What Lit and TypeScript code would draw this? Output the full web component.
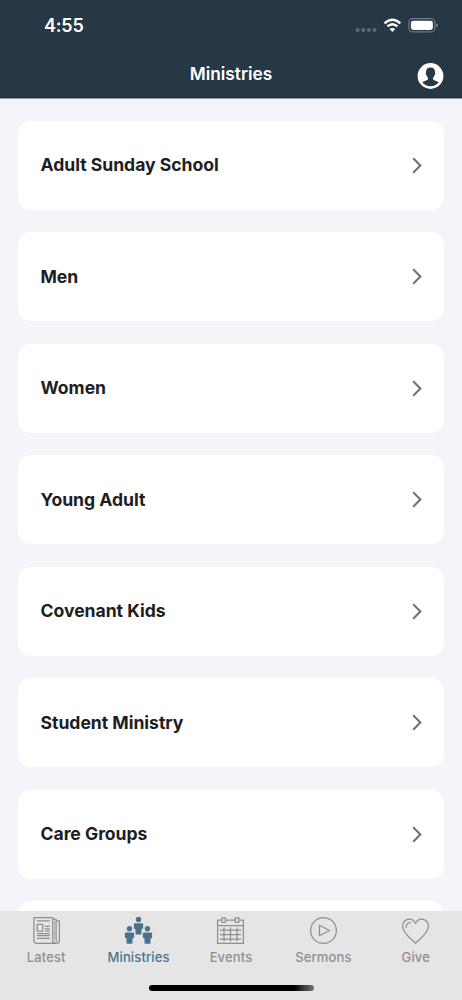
import { LitElement, html, css, svg } from "lit";
import { customElement, property } from "lit/decorators.js";

const ITEMS = [
  "Adult Sunday School",
  "Men",
  "Women",
  "Young Adult",
  "Covenant Kids",
  "Student Ministry",
  "Care Groups",
];

const person = (x: number, y: number) => svg`
  <g transform="translate(${x} ${y})" fill="currentColor" stroke="none">
    <circle cx="4.5" cy="2.9" r="2.7" />
    <path d="M.8 6.6H8.2Q9.1 6.6 9.1 7.5V12.2H7.7L7.3 18H1.7L1.3 12.2H-.1V7.5Q-.1 6.6 .8 6.6Z" />
  </g>`;

const ICONS: Record<string, unknown> = {
  latest: svg`
    <path d="M.9 .6H19.7V23.2Q19.7 26.3 22.5 26.3H3.6Q.9 26.3 .9 23.4Z" />
    <path d="M19.7 2H23.1V23Q23.1 24.2 24.2 24.2M23.1 3.8H26.4V23.4Q26.4 26.3 23.4 26.3H22.3Q20.9 26.2 20.6 24.5" />
    <path d="M21.5 4V22.8" stroke-width=".6" />
    <path d="M4 3.9H16.8M4.2 7.4H9.8V14.1H4.2ZM12 9.3H16.8M12 11.8H16.8M12 14.2H16.8M4 16.5H16.8M4 18.5H16.8M4 21.4H16.8" />`,
  ministries: svg`${person(9, -0.4)}${person(0, 8.8)}${person(18, 8.8)}`,
  events: svg`
    <path d="M4.6 3H.6V26.4H26.4V3H22.4M8.6 3H18M.6 8.7H26.4" />
    <path d="M4.8 .8H8.4V5.3H4.8ZM18.3 .8H21.9V5.3H18.3Z" />
    <path d="M2.7 13.1H24.3M2.7 17.6H24.3M2.7 22.1H24.3M7 10.6V24.5M13.5 10.6V24.5M20 10.6V24.5" />`,
  sermons: svg`
    <circle cx="13.5" cy="13.5" r="12.9" />
    <path d="M9.5 8.3V18.7L19.6 13.5Z" />`,
  give: svg`
    <path d="M13.5 26.2C10.5 23.2 .6 16.7 .6 9.1C.6 4.8 3.9 2 7.4 2C10.2 2 12.3 3.5 13.5 6.3C14.7 3.5 16.8 2 19.6 2C23.1 2 26.4 4.8 26.4 9.1C26.4 16.7 16.5 23.2 13.5 26.2Z" />
    <path d="M4.1 10.8C3.7 7.6 5.9 5.3 9.1 5.5" />`,
};

@customElement("tab-item")
class TabItem extends LitElement {
  @property() icon = "latest";
  @property() label = "";

  static styles = css`
    :host {
      display: flex;
      flex-direction: column;
      align-items: center;
      color: #8f8f8f;
    }
    :host([active]) {
      color: #4b728d;
    }
    svg {
      display: block;
      width: 27px;
      height: 27px;
      fill: none;
      stroke: currentColor;
      stroke-width: 1.25;
      stroke-linejoin: round;
      overflow: visible;
    }
    .label {
      margin-top: 5px;
      font-size: 13px;
      line-height: 16px;
      font-weight: 450;
      letter-spacing: 0.15px;
      white-space: nowrap;
    }
  `;

  render() {
    return html`
      <svg viewBox="0 0 27 27">${ICONS[this.icon]}</svg>
      <span class="label">${this.label}</span>
    `;
  }
}

@customElement("app-root")
class AppRoot extends LitElement {
  static styles = css`
    :host {
      display: flex;
      flex-direction: column;
      height: 1000px;
      width: 462px;
      overflow: hidden;
      background: #f4f5fa;
      font-family: Inter, "Liberation Sans", sans-serif;
    }
    * {
      box-sizing: border-box;
    }
    svg {
      display: block;
    }
    .header {
      flex: none;
      height: 99px;
      background: #263746;
      color: #fff;
      border-bottom: 1px solid #929aa3;
      box-shadow: inset 0 -1px #1f2e3b;
    }
    .status {
      display: flex;
      align-items: center;
      height: 50px;
      padding: 0 24px 0 44px;
    }
    .time {
      flex: 1;
      font-size: 18px;
      font-weight: 600;
      letter-spacing: -0.2px;
      padding-top: 1px;
    }
    .nav {
      display: grid;
      grid-template-columns: 45px 1fr 45px;
      height: 46px;
      align-items: center;
    }
    .title {
      text-align: center;
      font-size: 17.3px;
      font-weight: 600;
      letter-spacing: 0;
    }
    .profile {
      width: 26px;
      height: 26px;
      margin-top: 6px;
      overflow: visible;
    }
    .list {
      flex: 1;
      min-height: 0;
      overflow: hidden;
      display: flex;
      flex-direction: column;
      gap: 22.5px;
      padding: 21.9px 18px 0;
    }
    .card {
      flex: none;
      height: 89px;
      border-radius: 13px;
      background: #fff;
      display: flex;
      align-items: center;
      justify-content: space-between;
      padding: 0 22px 0 22.5px;
      color: #1d1e22;
      font-size: 17.6px;
      line-height: 22px;
      font-weight: 650;
      letter-spacing: -0.03px;
    }
    .chevron {
      width: 10px;
      height: 17px;
      fill: none;
      stroke: #6f7074;
      stroke-width: 2;
    }
    .tabs {
      flex: none;
      height: 89px;
      background: #e5e5e5;
      display: flex;
      flex-direction: column;
      justify-content: space-between;
      padding: 5.5px 0 9px;
    }
    .row {
      display: grid;
      grid-template-columns: repeat(5, 1fr);
    }
    .home {
      width: 165px;
      height: 6px;
      border-radius: 3px;
      align-self: center;
      background: linear-gradient(90deg, #000 88%, #777 100%);
    }
  `;

  render() {
    return html`
      <header class="header">
        <div class="status">
          <span class="time">4:55</span>
          <svg width="83" height="16" viewBox="355 17 83 16">
            <g fill="#5e6b77">
              <circle cx="357.6" cy="30" r="2" />
              <circle cx="363.3" cy="30" r="2" />
              <circle cx="368.9" cy="30" r="2" />
              <circle cx="374.5" cy="30" r="2" />
            </g>
            <g fill="none" stroke="#fff" stroke-width="2.4">
              <path d="M384.5 23.4Q392.4 16.1 400.3 23.4" />
              <path d="M387.4 26.4Q392.4 22 397.4 26.4" />
            </g>
            <path d="M389.6 29Q392.4 26.8 395.2 29L392.4 31.9Z" fill="#fff" />
            <rect x="408.9" y="18.7" width="26" height="13.2" rx="4" fill="none" stroke="#6f7b86" stroke-width="1.2" />
            <rect x="410.9" y="20.7" width="22" height="9.2" rx="2.3" fill="#fff" />
            <path d="M436.2 23.2Q437.9 23.9 437.9 25.3Q437.9 26.7 436.2 27.4Z" fill="#7c8791" />
          </svg>
        </div>
        <div class="nav">
          <span></span>
          <span class="title">Ministries</span>
          <svg class="profile" viewBox="-0.5 0 26 26">
            <circle cx="13" cy="13" r="12.9" fill="#fff" />
            <path
              fill="#263746"
              d="M13 4.6C16 4.6 17.6 6.5 17.5 9.2C17.5 10 17.9 10.3 17.6 11.3C17.4 12.1 17 12.2 16.7 13C16.4 13.9 15.4 14.8 15.4 15.8C15.4 17.6 19 17.6 21.2 19.6Q18 23.3 13 23.3Q8 23.3 4.8 19.6C7 17.6 10.6 17.6 10.6 15.8C10.6 14.8 9.6 13.9 9.3 13C9 12.2 8.6 12.1 8.4 11.3C8.1 10.3 8.5 10 8.5 9.2C8.4 6.5 10 4.6 13 4.6Z"
            />
          </svg>
        </div>
      </header>
      <main class="list">
        ${ITEMS.map(
          (name) => html`
            <div class="card">
              <span>${name}</span>
              <svg class="chevron" viewBox="0 0 10 17"><path d="M1.2 1.2L8.4 8.5L1.2 15.8" /></svg>
            </div>
          `
        )}
        <div class="card"></div>
      </main>
      <nav class="tabs">
        <div class="row">
          <tab-item icon="latest" label="Latest"></tab-item>
          <tab-item icon="ministries" label="Ministries" active></tab-item>
          <tab-item icon="events" label="Events"></tab-item>
          <tab-item icon="sermons" label="Sermons"></tab-item>
          <tab-item icon="give" label="Give"></tab-item>
        </div>
        <div class="home"></div>
      </nav>
    `;
  }
}
